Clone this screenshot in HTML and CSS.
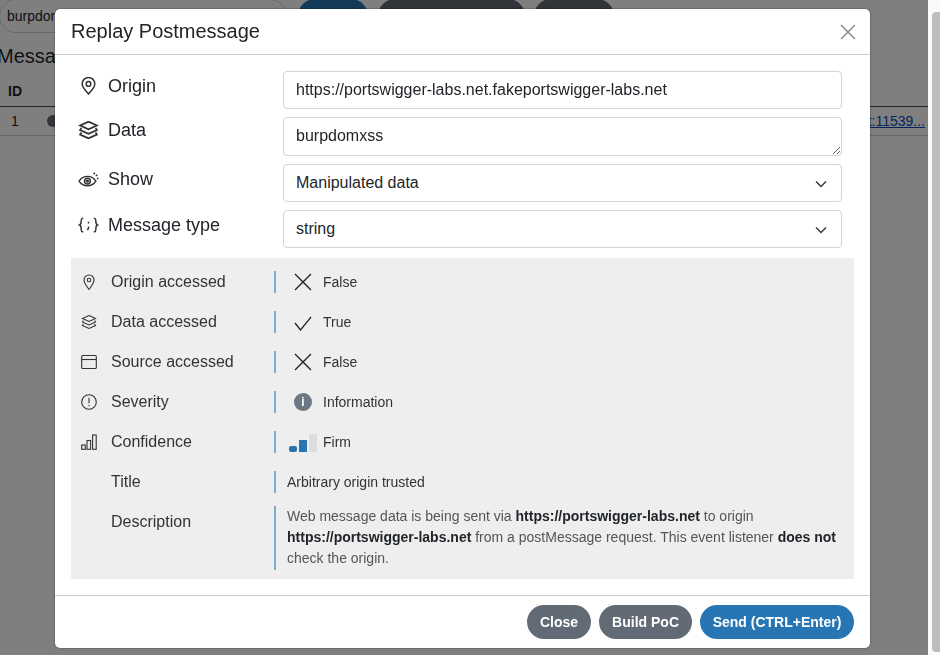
FILE: index.html
```html
<!DOCTYPE html>
<html lang="en">
<head>
  <meta charset="UTF-8" />
  <title>Replay Postmessage</title>
  <link rel="stylesheet" href="styles.css">
</head>
<body>
  <div class="page">
    <div class="toolbar">
      <input class="search" type="text" value="burpdomxss" />
      <span class="pill pill-blue"></span>
      <span class="pill pill-dark pill-wide"></span>
      <span class="pill pill-dark pill-narrow"></span>
    </div>
    <h2 class="page-title">Messages</h2>
    <div class="table-head">
      <span class="cell-id">ID</span>
      <svg class="head-icon" viewBox="0 0 16 16"><circle cx="8" cy="8" r="7.2"/></svg>
    </div>
    <div class="table-row">
      <span class="cell-id">1</span>
      <span class="dot"></span>
      <a class="row-link" href="#">https://portswigger-labs.net:11539...</a>
    </div>
    <div class="backdrop"></div>
  </div>
  <div class="scrollbar"><div class="thumb"></div></div>

  <div class="modal">
    <header class="modal-header">
      <h1>Replay Postmessage</h1>
      <svg class="close-icon" viewBox="0 0 16 16"><path d="M1 1l14 14M15 1L1 15"/></svg>
    </header>

    <div class="modal-body">
      <div class="form-grid">
        <label class="form-label">
          <svg class="icon" viewBox="0 0 16 17"><path d="M8 16C5 12.300 2 9.600 2 6.500a6 6 0 0 1 12 0C14 9.600 11 12.300 8 16z"/><circle cx="8" cy="6.500" r="2.200"/></svg>
          Origin
        </label>
        <input class="field" type="text" value="https://portswigger-labs.net.fakeportswigger-labs.net" />

        <label class="form-label label-data">
          <svg class="icon" viewBox="1 1 14 14"><path d="M8 1.500l6.500 3L8 7.500l-6.500-3zM2.500 6.500L1.500 8 8 11l6.500-3-1-1.500M2.500 10L1.500 11.500 8 14.500l6.500-3-1-1.500"/></svg>
          Data
        </label>
        <textarea class="field field-area">burpdomxss</textarea>

        <label class="form-label label-show">
          <svg class="icon" viewBox="0 0 20 16"><path d="M1 10c2-3 5-4.500 8-4.500s6 1.500 8 4.500c-2 3-5 4.500-8 4.500S3 13 1 10z"/><circle cx="9" cy="10" r="2.800"/><circle cx="9" cy="10" r=".9"/><path d="M15 3.500l1-1.500M17 5l1.500-1M18 7.500h1.500"/></svg>
          Show
        </label>
        <div class="select">Manipulated data
          <svg class="chevron" viewBox="0 0 12 8"><path d="M1 1.500l5 5 5-5"/></svg>
        </div>

        <label class="form-label label-type">
          <svg class="icon" viewBox="0 0 20 16"><path d="M5 1.500c-2 0-2 1-2 3s0 3-1.500 3.500C3 8.500 3 9.500 3 11.500s0 3 2 3M15 1.500c2 0 2 1 2 3s0 3 1.500 3.500C17 8.500 17 9.500 17 11.500s0 3-2 3M10 5v1.500M10 9.500V11l-1 2"/></svg>
          Message type
        </label>
        <div class="select">string
          <svg class="chevron" viewBox="0 0 12 8"><path d="M1 1.500l5 5 5-5"/></svg>
        </div>
      </div>

      <div class="summary">
        <div class="summary-row">
          <span class="summary-label">
            <svg class="mini" viewBox="0 0 16 16"><path d="M8 15.500C5.500 11.800 3 9.300 3 6a5 5 0 0 1 10 0c0 3.300-2.500 5.800-5 9.500z"/><circle cx="8" cy="6" r="1.800"/></svg>
            Origin accessed
          </span>
          <span class="summary-value">
            <svg class="state" viewBox="0 0 18 18"><path d="M1 1l16 16M17 1L1 17"/></svg>
            False
          </span>
        </div>
        <div class="summary-row">
          <span class="summary-label">
            <svg class="mini" viewBox="0 0 16 16"><path d="M8 1.500l6.500 3L8 7.500l-6.500-3zM2.500 6.500L1.500 8 8 11l6.500-3-1-1.500M2.500 10L1.500 11.500 8 14.500l6.500-3-1-1.500"/></svg>
            Data accessed
          </span>
          <span class="summary-value">
            <svg class="state" viewBox="0 0 18 18"><path d="M1 10l5.500 7L17 4"/></svg>
            True
          </span>
        </div>
        <div class="summary-row">
          <span class="summary-label">
            <svg class="mini" viewBox="0 0 16 16"><rect x=".7" y="1.500" width="14.600" height="13" rx="1"/><path d="M.7 5.500h14.600"/></svg>
            Source accessed
          </span>
          <span class="summary-value">
            <svg class="state" viewBox="0 0 18 18"><path d="M1 1l16 16M17 1L1 17"/></svg>
            False
          </span>
        </div>
        <div class="summary-row">
          <span class="summary-label">
            <svg class="mini" viewBox="0 0 16 16"><circle cx="8" cy="8" r="7.300"/><path d="M8 3.800v5.400M8 11v1.300"/></svg>
            Severity
          </span>
          <span class="summary-value">
            <span class="info-dot">i</span>
            Information
          </span>
        </div>
        <div class="summary-row">
          <span class="summary-label">
            <svg class="mini" viewBox="0 0 16 16"><rect x=".7" y="11" width="3.600" height="4.300"/><rect x="6" y="6.500" width="3.600" height="8.800"/><rect x="11.600" y="1" width="3.600" height="14.300"/></svg>
            Confidence
          </span>
          <span class="summary-value">
            <span class="bars"><i class="bar bar-1"></i><i class="bar bar-2"></i><i class="bar bar-3"></i></span>
            Firm
          </span>
        </div>
        <div class="summary-row">
          <span class="summary-label">Title</span>
          <span class="summary-value value-text">Arbitrary origin trusted</span>
        </div>
        <div class="summary-row row-description">
          <span class="summary-label">Description</span>
          <p class="summary-value value-text description">Web message data is being sent via <b>https://portswigger-labs.net</b> to origin <b>https://portswigger-labs.net</b> from a postMessage request. This event listener <b>does not</b> check the origin.</p>
        </div>
      </div>
    </div>

    <footer class="modal-footer">
      <button class="btn btn-grey">Close</button>
      <button class="btn btn-grey">Build PoC</button>
      <button class="btn btn-blue btn-send">Send (CTRL+Enter)</button>
    </footer>
  </div>
</body>
</html>
```

FILE: styles.css
```css
* {
  box-sizing: border-box;
}
html, body {
  height: 100%;
}
body {
  margin: 0;
  height: 655px;
  overflow: hidden;
  display: flex;
  font-family: "Liberation Sans", Arial, sans-serif;
  color: #212529;
  background: #fff;
}

/* page behind the dialog */
.page {
  position: relative;
  width: 928px;
  height: 655px;
  overflow: hidden;
  background: #fff;
}
.backdrop {
  position: absolute;
  inset: 0;
  background: rgba(0, 0, 0, 0.5);
}
.toolbar {
  display: flex;
  gap: 10px;
  height: 34px;
  margin-top: -1px;
}
.search {
  width: 288px;
  height: 34px;
  margin-left: -1px;
  padding: 0 7px;
  border: 1px solid #ced4da;
  border-radius: 17px;
  font: 14px "Liberation Sans", Arial, sans-serif;
  color: #212529;
}
.pill {
  width: 70px;
  height: 34px;
  border-radius: 17px;
}
.pill-blue {
  background: #2776b3;
  margin-left: 1px;
}
.pill-dark {
  background: #626b75;
}
.pill-wide {
  width: 147px;
}
.pill-narrow {
  width: 80px;
  margin-left: -1px;
}
.page-title {
  margin: 9px 0 0 -3px;
  height: 29px;
  font-size: 20px;
  line-height: 29px;
  font-weight: 400;
}
.table-head {
  display: flex;
  align-items: center;
  gap: 16px;
  height: 36px;
  padding: 4px 0 0 8px;
  border-bottom: 1px solid #444;
  font-size: 14px;
  font-weight: 700;
}
.head-icon {
  width: 16px;
  height: 16px;
  fill: none;
  stroke: #333;
}
.table-row {
  display: flex;
  align-items: center;
  height: 29px;
  padding: 0 3px 0 11px;
  border-bottom: 1px solid #ccc;
  font-size: 14px;
}
.cell-id {
  width: 36px;
}
.dot {
  width: 12px;
  height: 12px;
  border-radius: 50%;
  background: #626b75;
}
.row-link {
  margin-left: auto;
  color: #0d47c0;
}
.scrollbar {
  flex: 1;
  padding: 12px 0 0 4px;
  background: #fafafa;
}
.thumb {
  height: 640px;
  border-radius: 4px 0 0 4px;
  background: #bcbcbc;
}

/* dialog */
.modal {
  position: fixed;
  top: 9px;
  left: 55px;
  display: flex;
  flex-direction: column;
  width: 815px;
  height: 639px;
  border-radius: 5px;
  background: #fff;
  box-shadow: 0 0 2px rgba(0, 0, 0, 0.5);
}
.modal-header {
  display: flex;
  align-items: center;
  justify-content: space-between;
  flex: none;
  height: 46px;
  padding: 0 14px 0 16px;
  border-bottom: 1px solid #c8ced4;
}
.modal-header h1 {
  margin: 0;
  font-size: 20px;
  font-weight: 400;
}
.close-icon {
  width: 16px;
  height: 16px;
  fill: none;
  stroke: #8a8a8a;
  stroke-width: 1.500;
}
.modal-body {
  flex: 1;
  padding: 16px;
}
.form-grid {
  display: grid;
  grid-template-columns: 212px 559px;
  grid-template-rows: 38px 39px 38px 38px;
  row-gap: 8px;
}
.form-label {
  display: flex;
  align-items: flex-start;
  gap: 9px;
  padding: 4px 0 0 7px;
  font-size: 18px;
  line-height: 22px;
}
.label-data {
  padding-top: 2px;
}
.icon {
  flex: none;
  width: 21px;
  height: 18px;
  margin-top: 2px;
  fill: none;
  stroke: #333;
  stroke-width: 1.400;
}
.field,
.select {
  width: 559px;
  height: 100%;
  padding: 0 12px;
  border: 1px solid #ced4da;
  border-radius: 4px;
  background: #fff;
  font: 16px/36px "Liberation Sans", Arial, sans-serif;
  color: #212529;
}
.field-area {
  display: block;
  padding-top: 6px;
  line-height: 24px;
}
.select {
  position: relative;
}
.chevron {
  position: absolute;
  top: 15px;
  right: 14px;
  width: 12px;
  height: 8px;
  fill: none;
  stroke: #343a40;
  stroke-width: 1.500;
}

/* result summary */
.summary {
  margin-top: 10px;
  padding: 4px 0 9px;
  background: #eee;
}
.summary-row {
  display: flex;
  align-items: center;
  height: 40px;
}
.summary-label {
  display: flex;
  align-items: center;
  flex: none;
  width: 203px;
  padding-left: 40px;
  font-size: 16px;
  color: #333;
  position: relative;
}
.mini {
  position: absolute;
  left: 10px;
  width: 16px;
  height: 16px;
  fill: none;
  stroke: #333;
  stroke-width: 1.100;
}
.summary-value {
  display: flex;
  align-items: center;
  height: 22px;
  margin: 0;
  padding-left: 18px;
  border-left: 2px solid #7badd1;
  font-size: 14px;
  color: #333;
}
.state {
  flex: none;
  width: 18px;
  height: 18px;
  margin-right: 11px;
  fill: none;
  stroke: #222;
  stroke-width: 1.300;
}
.info-dot {
  display: flex;
  align-items: center;
  justify-content: center;
  flex: none;
  width: 18px;
  height: 18px;
  margin-right: 11px;
  border-radius: 50%;
  background: #6c7985;
  color: #fff;
  font-size: 12px;
  font-weight: 700;
}
.bars {
  display: flex;
  align-items: flex-end;
  gap: 2px;
  flex: none;
  height: 18px;
  margin: 2px 6px 0 -5px;
}
.bar {
  width: 8px;
  background: #2776b3;
}
.bar-1 {
  height: 6px;
  border-radius: 2px;
}
.bar-2 {
  height: 12px;
}
.bar-3 {
  height: 18px;
  background: #ddd;
}
.value-text {
  padding-left: 11px;
}
.row-description {
  align-items: flex-start;
  height: auto;
}
.row-description .summary-label {
  padding-top: 11px;
}
.description {
  display: block;
  flex: 1;
  height: auto;
  margin: 4px 0 0;
  padding: 0 12px 1px 11px;
  font-size: 14px;
  line-height: 21px;
  color: #555;
}
.description b {
  color: #212529;
}
.modal-footer {
  display: flex;
  justify-content: flex-end;
  gap: 8px;
  flex: none;
  height: 53px;
  padding: 9px 16px 0;
  border-top: 1px solid #c8ced4;
}
.btn {
  height: 34px;
  padding: 0 13px;
  border: 0;
  border-radius: 17px;
  font: 700 14px "Liberation Sans", Arial, sans-serif;
  color: #fff;
}
.btn-grey {
  background: #626b75;
}
.btn-blue {
  background: #2776b3;
}
.btn-send {
  width: 154px;
  padding: 0;
}
```
